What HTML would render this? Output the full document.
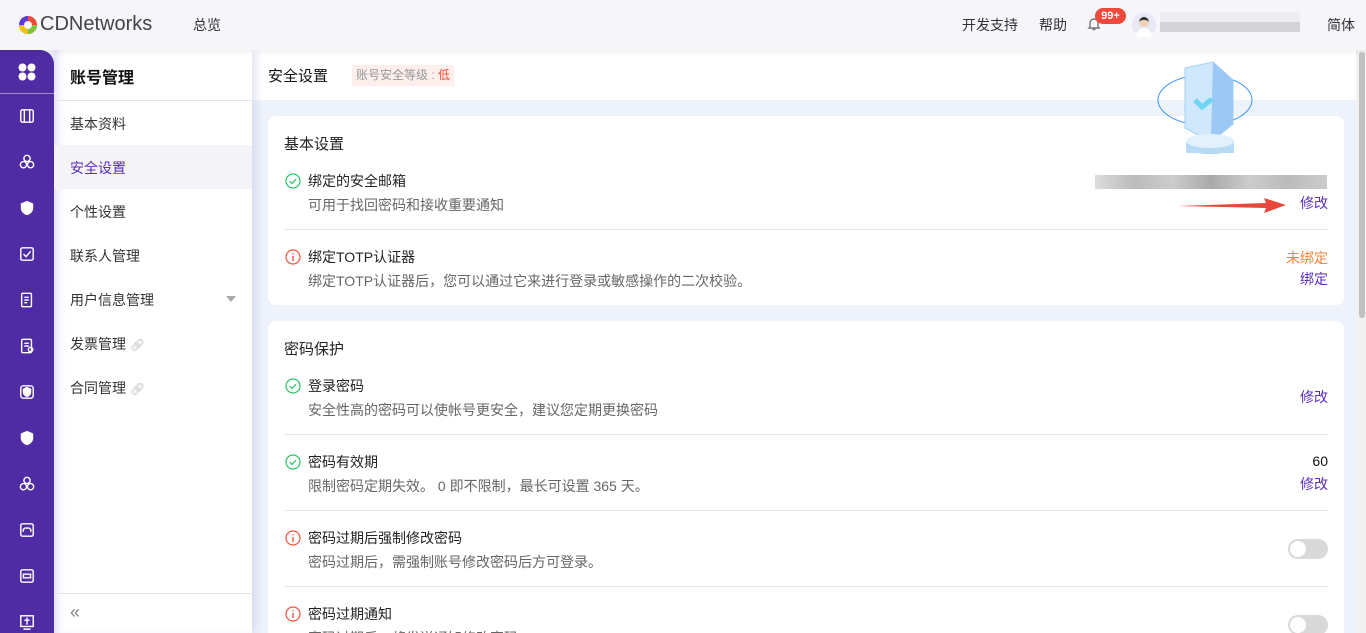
<!DOCTYPE html>
<html style="width:1366px;height:633px;overflow:hidden"><head><meta charset="utf-8"><style>
*{margin:0;padding:0;box-sizing:border-box}
body{width:1366px;height:633px;overflow:hidden;background:#eef2fb;font-family:"Liberation Sans","Noto Sans CJK SC",sans-serif;color:#222;position:relative}
.hdr{position:absolute;left:0;top:0;width:1366px;height:50px;background:#f5f5fa;box-shadow:0 2px 6px rgba(0,0,0,.06);z-index:3}
.abs{position:absolute}
.side{position:absolute;left:0;top:50px;width:54px;height:583px;background:#4f2ca3;border-top-right-radius:14px;z-index:2}
.sub{position:absolute;left:54px;top:50px;width:198px;height:583px;background:#fff;box-shadow:inset 8px 0 10px -6px rgba(90,90,200,.25),4px 0 8px rgba(120,130,190,.2);z-index:1}
.sub .it{position:absolute;left:16px;font-size:14px;color:#333}
.card{position:absolute;left:268px;width:1076px;background:#fff;border-radius:8px}
.t{position:absolute;left:40px;font-size:14px;color:#222}
.d{position:absolute;left:40px;font-size:14px;color:#666}
.ln{position:absolute;left:16px;right:16px;height:1px;background:#e6e6e6}
.r{position:absolute;right:16px;font-size:14px}
.pl{color:#5b2fb8}
.ic{position:absolute;left:17px;width:16px;height:16px}
.tg{position:absolute;right:16px;width:40px;height:20px;border-radius:10px;background:#d9d9d9}
.tg::after{content:"";position:absolute;left:2px;top:2px;width:16px;height:16px;border-radius:50%;background:#fff}
.si{position:absolute;left:19px;width:16px;height:16px}
</style></head><body>
<div class="hdr">
 <svg class="abs" style="left:18px;top:15px" width="20" height="20" viewBox="0 0 20 20"><circle cx="10" cy="10" r="9" fill="#e84a3c"/><path d="M10 1a9 9 0 0 0-9 9h9z" fill="#5b3bd6"/><path d="M1 10a9 9 0 0 0 9 9v-9z" fill="#f2c01d"/><path d="M10 19a9 9 0 0 0 9-9h-9z" fill="#7cc63a"/><circle cx="10" cy="10" r="4" fill="#f5f5fa"/></svg>
 <div class="abs" style="left:40px;top:13px;font-size:20px;color:#444">CDNetworks</div>
 <div class="abs" style="left:193px;top:15px;font-size:14px;color:#333">总览</div>
 <div class="abs" style="left:962px;top:15px;font-size:14px;color:#333">开发支持</div>
 <div class="abs" style="left:1039px;top:15px;font-size:14px;color:#333">帮助</div>
 <svg class="abs" style="left:1087px;top:16px" width="14" height="16" viewBox="0 0 14 16"><path d="M3 11V7a4 4 0 0 1 8 0v4l1 1H2z M5.5 13.5h3" fill="none" stroke="#777" stroke-width="1.4"/></svg>
 <div class="abs" style="left:1095px;top:8px;width:31px;height:16px;border-radius:8px;background:#f0483a;color:#fff;font-size:11px;font-weight:bold;text-align:center;line-height:16px">99+</div>
 <div class="abs" style="left:1132px;top:13px;width:24px;height:24px;border-radius:50%;background:#e6e8f3"><div style="position:absolute;left:7px;top:4px;width:10px;height:10px;border-radius:50%;background:#f1d0b8;border-top:3px solid #333"></div><div style="position:absolute;left:4px;top:15px;width:16px;height:9px;border-radius:8px 8px 0 0;background:#fff"></div></div>
 <div class="abs" style="left:1160px;top:12px;width:140px;height:10px;background:#ececf1"></div>
 <div class="abs" style="left:1160px;top:22px;width:140px;height:10px;background:#d4d4d8"></div>
 <div class="abs" style="left:1327px;top:15px;font-size:14px;color:#333">简体</div>
</div>
<div class="side">
 <svg class="abs" style="left:18px;top:13px" width="18" height="18" viewBox="0 0 18 18" fill="#fff"><circle cx="4.5" cy="4.5" r="4"/><circle cx="13.5" cy="4.5" r="4"/><circle cx="4.5" cy="13.5" r="4"/><circle cx="13.5" cy="13.5" r="4"/></svg>
 <div class="abs" style="left:0;top:43px;width:54px;height:1px;background:rgba(255,255,255,.45)"></div>
 <svg class="si" style="top:58px" viewBox="0 0 18 18" fill="none" stroke="#fff" stroke-width="1.6"><rect x="2" y="2" width="14" height="14" rx="2"/><path d="M6 2v14M12 2v14"/></svg>
 <svg class="si" style="top:104px" viewBox="0 0 18 18" fill="none" stroke="#fff" stroke-width="1.6"><circle cx="9" cy="5" r="3.5"/><circle cx="5" cy="12" r="3.5"/><circle cx="13" cy="12" r="3.5"/></svg>
 <svg class="si" style="top:150px" viewBox="0 0 18 18" fill="#fff"><path d="M9 1l7 3v5c0 4-3 7-7 8-4-1-7-4-7-8V4z"/></svg>
 <svg class="si" style="top:196px" viewBox="0 0 18 18" fill="none" stroke="#fff" stroke-width="1.6"><rect x="2" y="2" width="14" height="14" rx="2"/><path d="M5 9l3 3 5-6"/></svg>
 <svg class="si" style="top:242px" viewBox="0 0 18 18" fill="none" stroke="#fff" stroke-width="1.6"><rect x="3" y="1.5" width="11" height="15" rx="1.5"/><path d="M6 6h5M6 9h5M6 12h3"/></svg>
 <svg class="si" style="top:288px" viewBox="0 0 18 18" fill="none" stroke="#fff" stroke-width="1.6"><rect x="3" y="1.5" width="11" height="15" rx="1.5"/><path d="M6 6h5M6 9h5"/><circle cx="13" cy="13" r="2.5"/></svg>
 <svg class="si" style="top:334px" viewBox="0 0 18 18" fill="none" stroke="#fff" stroke-width="1.6"><rect x="2" y="2" width="14" height="14" rx="3"/><path d="M9 4l4 2v3c0 2-2 4-4 5-2-1-4-3-4-5V6z" fill="#fff"/></svg>
 <svg class="si" style="top:380px" viewBox="0 0 18 18" fill="#fff"><path d="M9 1l7 3v5c0 4-3 7-7 8-4-1-7-4-7-8V4z"/></svg>
 <svg class="si" style="top:426px" viewBox="0 0 18 18" fill="none" stroke="#fff" stroke-width="1.6"><circle cx="9" cy="5" r="3.5"/><circle cx="5" cy="12" r="3.5"/><circle cx="13" cy="12" r="3.5"/></svg>
 <svg class="si" style="top:472px" viewBox="0 0 18 18" fill="none" stroke="#fff" stroke-width="1.6"><rect x="2" y="2" width="14" height="14" rx="2"/><path d="M5 11a3 3 0 0 1 4-4 3 3 0 0 1 4 4"/></svg>
 <svg class="si" style="top:518px" viewBox="0 0 18 18" fill="none" stroke="#fff" stroke-width="1.6"><rect x="2" y="2" width="14" height="14" rx="2"/><path d="M5 7h8v4H5z"/></svg>
 <svg class="si" style="top:564px" viewBox="0 0 18 18" fill="none" stroke="#fff" stroke-width="1.6"><rect x="2" y="2" width="14" height="12"/><path d="M9 4v8M6 7h6M5 17h8"/></svg>
</div>
<div class="sub">
 <div class="it" style="top:14px;font-size:16px;font-weight:bold;color:#111">账号管理</div>
 <div class="abs" style="left:0;top:50px;width:198px;height:1px;background:#e4e4e8"></div>
 <div class="it" style="top:64px">基本资料</div>
 <div class="abs" style="left:0;top:95px;width:198px;height:44px;background:#f3f3f8"></div>
 <div class="it" style="top:108px;color:#5b2fb8">安全设置</div>
 <div class="it" style="top:152px">个性设置</div>
 <div class="it" style="top:196px">联系人管理</div>
 <div class="it" style="top:240px">用户信息管理</div>
 <div class="abs" style="left:172px;top:246px;border:5px solid transparent;border-top:6px solid #aaa"></div>
 <div class="it" style="top:284px">发票管理 <span style="color:#bbb;font-size:12px">🔗︎</span></div>
 <div class="it" style="top:328px">合同管理 <span style="color:#bbb;font-size:12px">🔗︎</span></div>
 <div class="abs" style="left:0;top:543px;width:198px;height:1px;background:#e4e4e8"></div>
 <div class="it" style="top:552px;color:#888;font-size:18px">«</div>
</div>
<div class="abs" style="left:252px;top:50px;width:1104px;height:50px;background:#fff"></div>
<div class="abs" style="left:268px;top:65px;font-size:15px;color:#111">安全设置</div>
<div class="abs" style="left:352px;top:65px;height:21px;padding:0 4px;background:#fdf0ec;font-size:12px;line-height:21px;color:#999">账号安全等级 : <span style="color:#f04c3a">低</span></div>
<div class="card" style="top:116px;height:189px">
 <div class="t" style="left:16px;top:17px;font-size:15px">基本设置</div>
 <svg class="ic" style="top:57px" viewBox="0 0 16 16"><circle cx="8" cy="8" r="7" fill="none" stroke="#2ec26a" stroke-width="1.2"/><path d="M4.8 8.2l2.2 2.2 4-4.2" fill="none" stroke="#2ec26a" stroke-width="1.3"/></svg>
 <div class="t" style="top:55px">绑定的安全邮箱</div>
 <div class="d" style="top:79px">可用于找回密码和接收重要通知</div>
 <div class="abs" style="left:827px;top:59px;width:232px;height:14px;background:linear-gradient(90deg,#ddd,#bbb,#ccc,#aaa,#ccc,#bbb,#ccc)"></div>
 <svg class="abs" style="left:908px;top:80px" width="112" height="20" viewBox="0 0 112 20"><path d="M2 10 L90 7 L88 2 L110 9 L88 17 L90 12 Z" fill="#e8473b"/></svg>
 <div class="r pl" style="top:77px">修改</div>
 <div class="ln" style="top:113px"></div>
 <svg class="ic" style="top:133px" viewBox="0 0 16 16"><circle cx="8" cy="8" r="7" fill="none" stroke="#f0533e" stroke-width="1.2"/><path d="M8 4.2v1.2M8 7v5" stroke="#f0533e" stroke-width="1.4"/></svg>
 <div class="t" style="top:131px">绑定TOTP认证器</div>
 <div class="d" style="top:155px">绑定TOTP认证器后，您可以通过它来进行登录或敏感操作的二次校验。</div>
 <div class="r" style="top:132px;color:#f6843a">未绑定</div>
 <div class="r pl" style="top:153px">绑定</div>
</div>
<svg class="abs" style="left:1155px;top:60px;z-index:2" width="105" height="105" viewBox="0 0 105 105"><ellipse cx="50" cy="40" rx="47" ry="25" fill="none" stroke="#3a95f0" stroke-width="1"/><path d="M30 8l28-6 20 18v44l-22 18-26-14z" fill="#cfe8fb" stroke="#9fd0f5"/><path d="M58 2l20 18v44l-22 18z" fill="#9cc8f6"/><path d="M40 40l7 7 10-8" fill="none" stroke="#6cd6f5" stroke-width="5"/><ellipse cx="55" cy="87" rx="24" ry="7" fill="#a8d2f5"/><rect x="31" y="81" width="48" height="12" fill="#b8dbf5"/><ellipse cx="55" cy="81" rx="24" ry="7" fill="#e2f1fc"/></svg>
<div class="card" style="top:321px;height:330px">
 <div class="t" style="left:16px;top:17px;font-size:15px">密码保护</div>
 <svg class="ic" style="top:57px" viewBox="0 0 16 16"><circle cx="8" cy="8" r="7" fill="none" stroke="#2ec26a" stroke-width="1.2"/><path d="M4.8 8.2l2.2 2.2 4-4.2" fill="none" stroke="#2ec26a" stroke-width="1.3"/></svg>
 <div class="t" style="top:55px">登录密码</div>
 <div class="d" style="top:79px">安全性高的密码可以使帐号更安全，建议您定期更换密码</div>
 <div class="r pl" style="top:66px">修改</div>
 <div class="ln" style="top:113px"></div>
 <svg class="ic" style="top:133px" viewBox="0 0 16 16"><circle cx="8" cy="8" r="7" fill="none" stroke="#2ec26a" stroke-width="1.2"/><path d="M4.8 8.2l2.2 2.2 4-4.2" fill="none" stroke="#2ec26a" stroke-width="1.3"/></svg>
 <div class="t" style="top:131px">密码有效期</div>
 <div class="d" style="top:155px">限制密码定期失效。 0 即不限制，最长可设置 365 天。</div>
 <div class="r" style="top:132px;color:#111;font-size:14px">60</div>
 <div class="r pl" style="top:153px">修改</div>
 <div class="ln" style="top:189px"></div>
 <svg class="ic" style="top:209px" viewBox="0 0 16 16"><circle cx="8" cy="8" r="7" fill="none" stroke="#f0533e" stroke-width="1.2"/><path d="M8 4.2v1.2M8 7v5" stroke="#f0533e" stroke-width="1.4"/></svg>
 <div class="t" style="top:207px">密码过期后强制修改密码</div>
 <div class="d" style="top:231px">密码过期后，需强制账号修改密码后方可登录。</div>
 <div class="tg" style="top:218px"></div>
 <div class="ln" style="top:265px"></div>
 <svg class="ic" style="top:285px" viewBox="0 0 16 16"><circle cx="8" cy="8" r="7" fill="none" stroke="#f0533e" stroke-width="1.2"/><path d="M8 4.2v1.2M8 7v5" stroke="#f0533e" stroke-width="1.4"/></svg>
 <div class="t" style="top:283px">密码过期通知</div>
 <div class="d" style="top:307px">密码过期后，将发送通知修改密码。</div>
 <div class="tg" style="top:294px"></div>
</div>
<div class="abs" style="left:1356px;top:50px;width:10px;height:583px;background:#f1f1f1"></div>
<div class="abs" style="left:1359px;top:52px;width:6px;height:266px;border-radius:3px;background:#c1c1c1"></div>
</body></html>
